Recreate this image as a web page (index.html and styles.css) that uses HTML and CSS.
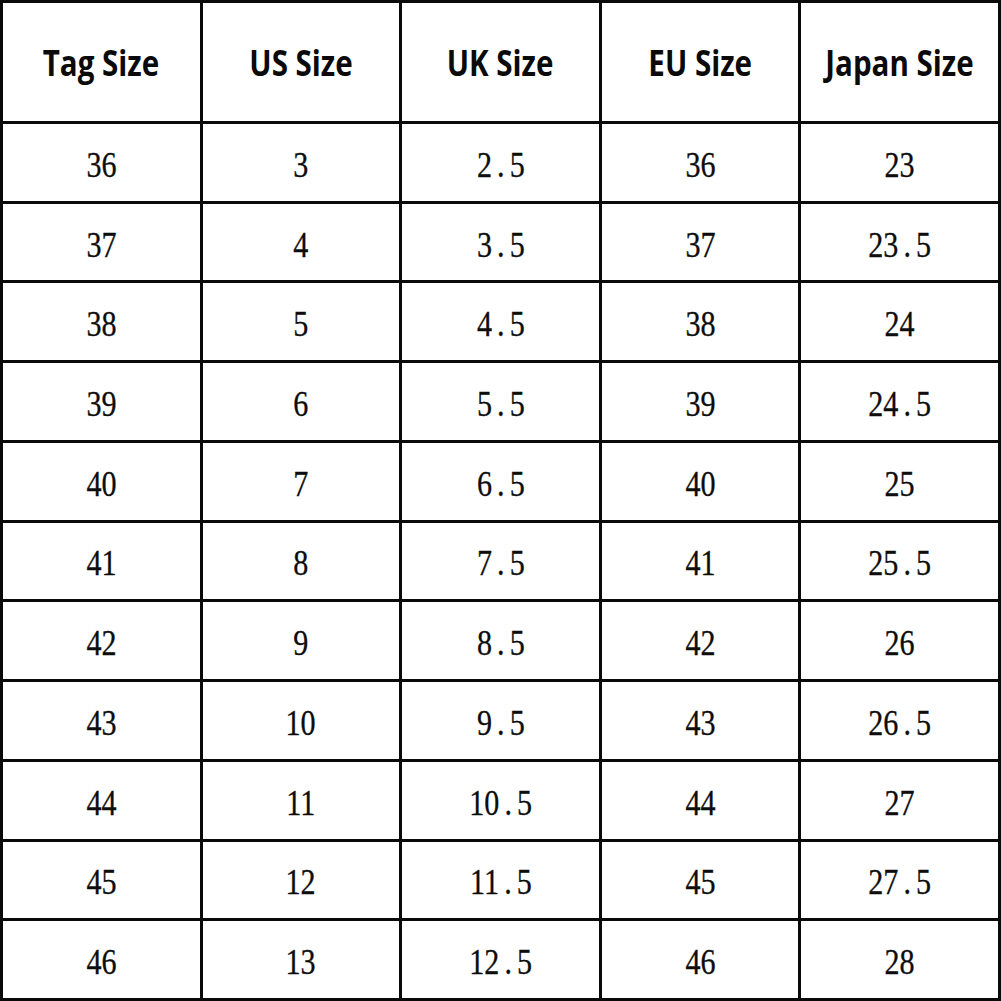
FILE: index.html
```html
<!DOCTYPE html>
<html>
<head>
<meta charset="utf-8">
<link rel="stylesheet" href="styles.css">
</head>
<body>
<div class="chart">
  <div class="cell head"><span>Tag Size</span></div>
  <div class="cell head"><span>US Size</span></div>
  <div class="cell head"><span>UK Size</span></div>
  <div class="cell head"><span>EU Size</span></div>
  <div class="cell head"><span>Japan Size</span></div>

  <div class="cell"><span>36</span></div><div class="cell"><span>3</span></div><div class="cell"><span>2<i class="dot">.</i>5</span></div><div class="cell"><span>36</span></div><div class="cell"><span>23</span></div>
  <div class="cell"><span>37</span></div><div class="cell"><span>4</span></div><div class="cell"><span>3<i class="dot">.</i>5</span></div><div class="cell"><span>37</span></div><div class="cell"><span>23<i class="dot">.</i>5</span></div>
  <div class="cell"><span>38</span></div><div class="cell"><span>5</span></div><div class="cell"><span>4<i class="dot">.</i>5</span></div><div class="cell"><span>38</span></div><div class="cell"><span>24</span></div>
  <div class="cell"><span>39</span></div><div class="cell"><span>6</span></div><div class="cell"><span>5<i class="dot">.</i>5</span></div><div class="cell"><span>39</span></div><div class="cell"><span>24<i class="dot">.</i>5</span></div>
  <div class="cell"><span>40</span></div><div class="cell"><span>7</span></div><div class="cell"><span>6<i class="dot">.</i>5</span></div><div class="cell"><span>40</span></div><div class="cell"><span>25</span></div>
  <div class="cell"><span>41</span></div><div class="cell"><span>8</span></div><div class="cell"><span>7<i class="dot">.</i>5</span></div><div class="cell"><span>41</span></div><div class="cell"><span>25<i class="dot">.</i>5</span></div>
  <div class="cell"><span>42</span></div><div class="cell"><span>9</span></div><div class="cell"><span>8<i class="dot">.</i>5</span></div><div class="cell"><span>42</span></div><div class="cell"><span>26</span></div>
  <div class="cell"><span>43</span></div><div class="cell"><span>10</span></div><div class="cell"><span>9<i class="dot">.</i>5</span></div><div class="cell"><span>43</span></div><div class="cell"><span>26<i class="dot">.</i>5</span></div>
  <div class="cell"><span>44</span></div><div class="cell"><span>11</span></div><div class="cell"><span>10<i class="dot">.</i>5</span></div><div class="cell"><span>44</span></div><div class="cell"><span>27</span></div>
  <div class="cell"><span>45</span></div><div class="cell"><span>12</span></div><div class="cell"><span>11<i class="dot">.</i>5</span></div><div class="cell"><span>45</span></div><div class="cell"><span>27<i class="dot">.</i>5</span></div>
  <div class="cell"><span>46</span></div><div class="cell"><span>13</span></div><div class="cell"><span>12<i class="dot">.</i>5</span></div><div class="cell"><span>46</span></div><div class="cell"><span>28</span></div>
</div>
</body>
</html>
```

FILE: styles.css
```css
html, body {
  margin: 0;
  padding: 0;
  background: #fff;
}

.chart {
  box-sizing: border-box;
  width: 1001px;
  height: 1001px;
  display: grid;
  grid-template-columns: repeat(5, 1fr);
  grid-template-rows: 118px repeat(11, 1fr);
  gap: 3px;
  padding: 3px;
  background: #0a0a0a;
}

.cell {
  background: #fff;
  display: flex;
  align-items: center;
  justify-content: center;
  font-family: "Liberation Serif", "DejaVu Serif", serif;
  font-size: 35px;
  color: #0d0d0d;
  padding-top: 7px;
  box-sizing: border-box;
}

.cell span {
  display: inline-block;
  transform: scaleX(0.86);
  white-space: nowrap;
  -webkit-text-stroke: 0.3px #0d0d0d;
}

.cell.head {
  padding-top: 0;
  font-family: "Open Sans", "Noto Sans", sans-serif;
  font-weight: 700;
  font-size: 36px;
  color: #0a0a0a;
}

.cell.head span {
  transform: scaleX(0.82);
  -webkit-text-stroke: 0;
}

.dot {
  font-style: normal;
  padding: 0 6px;
}
```
